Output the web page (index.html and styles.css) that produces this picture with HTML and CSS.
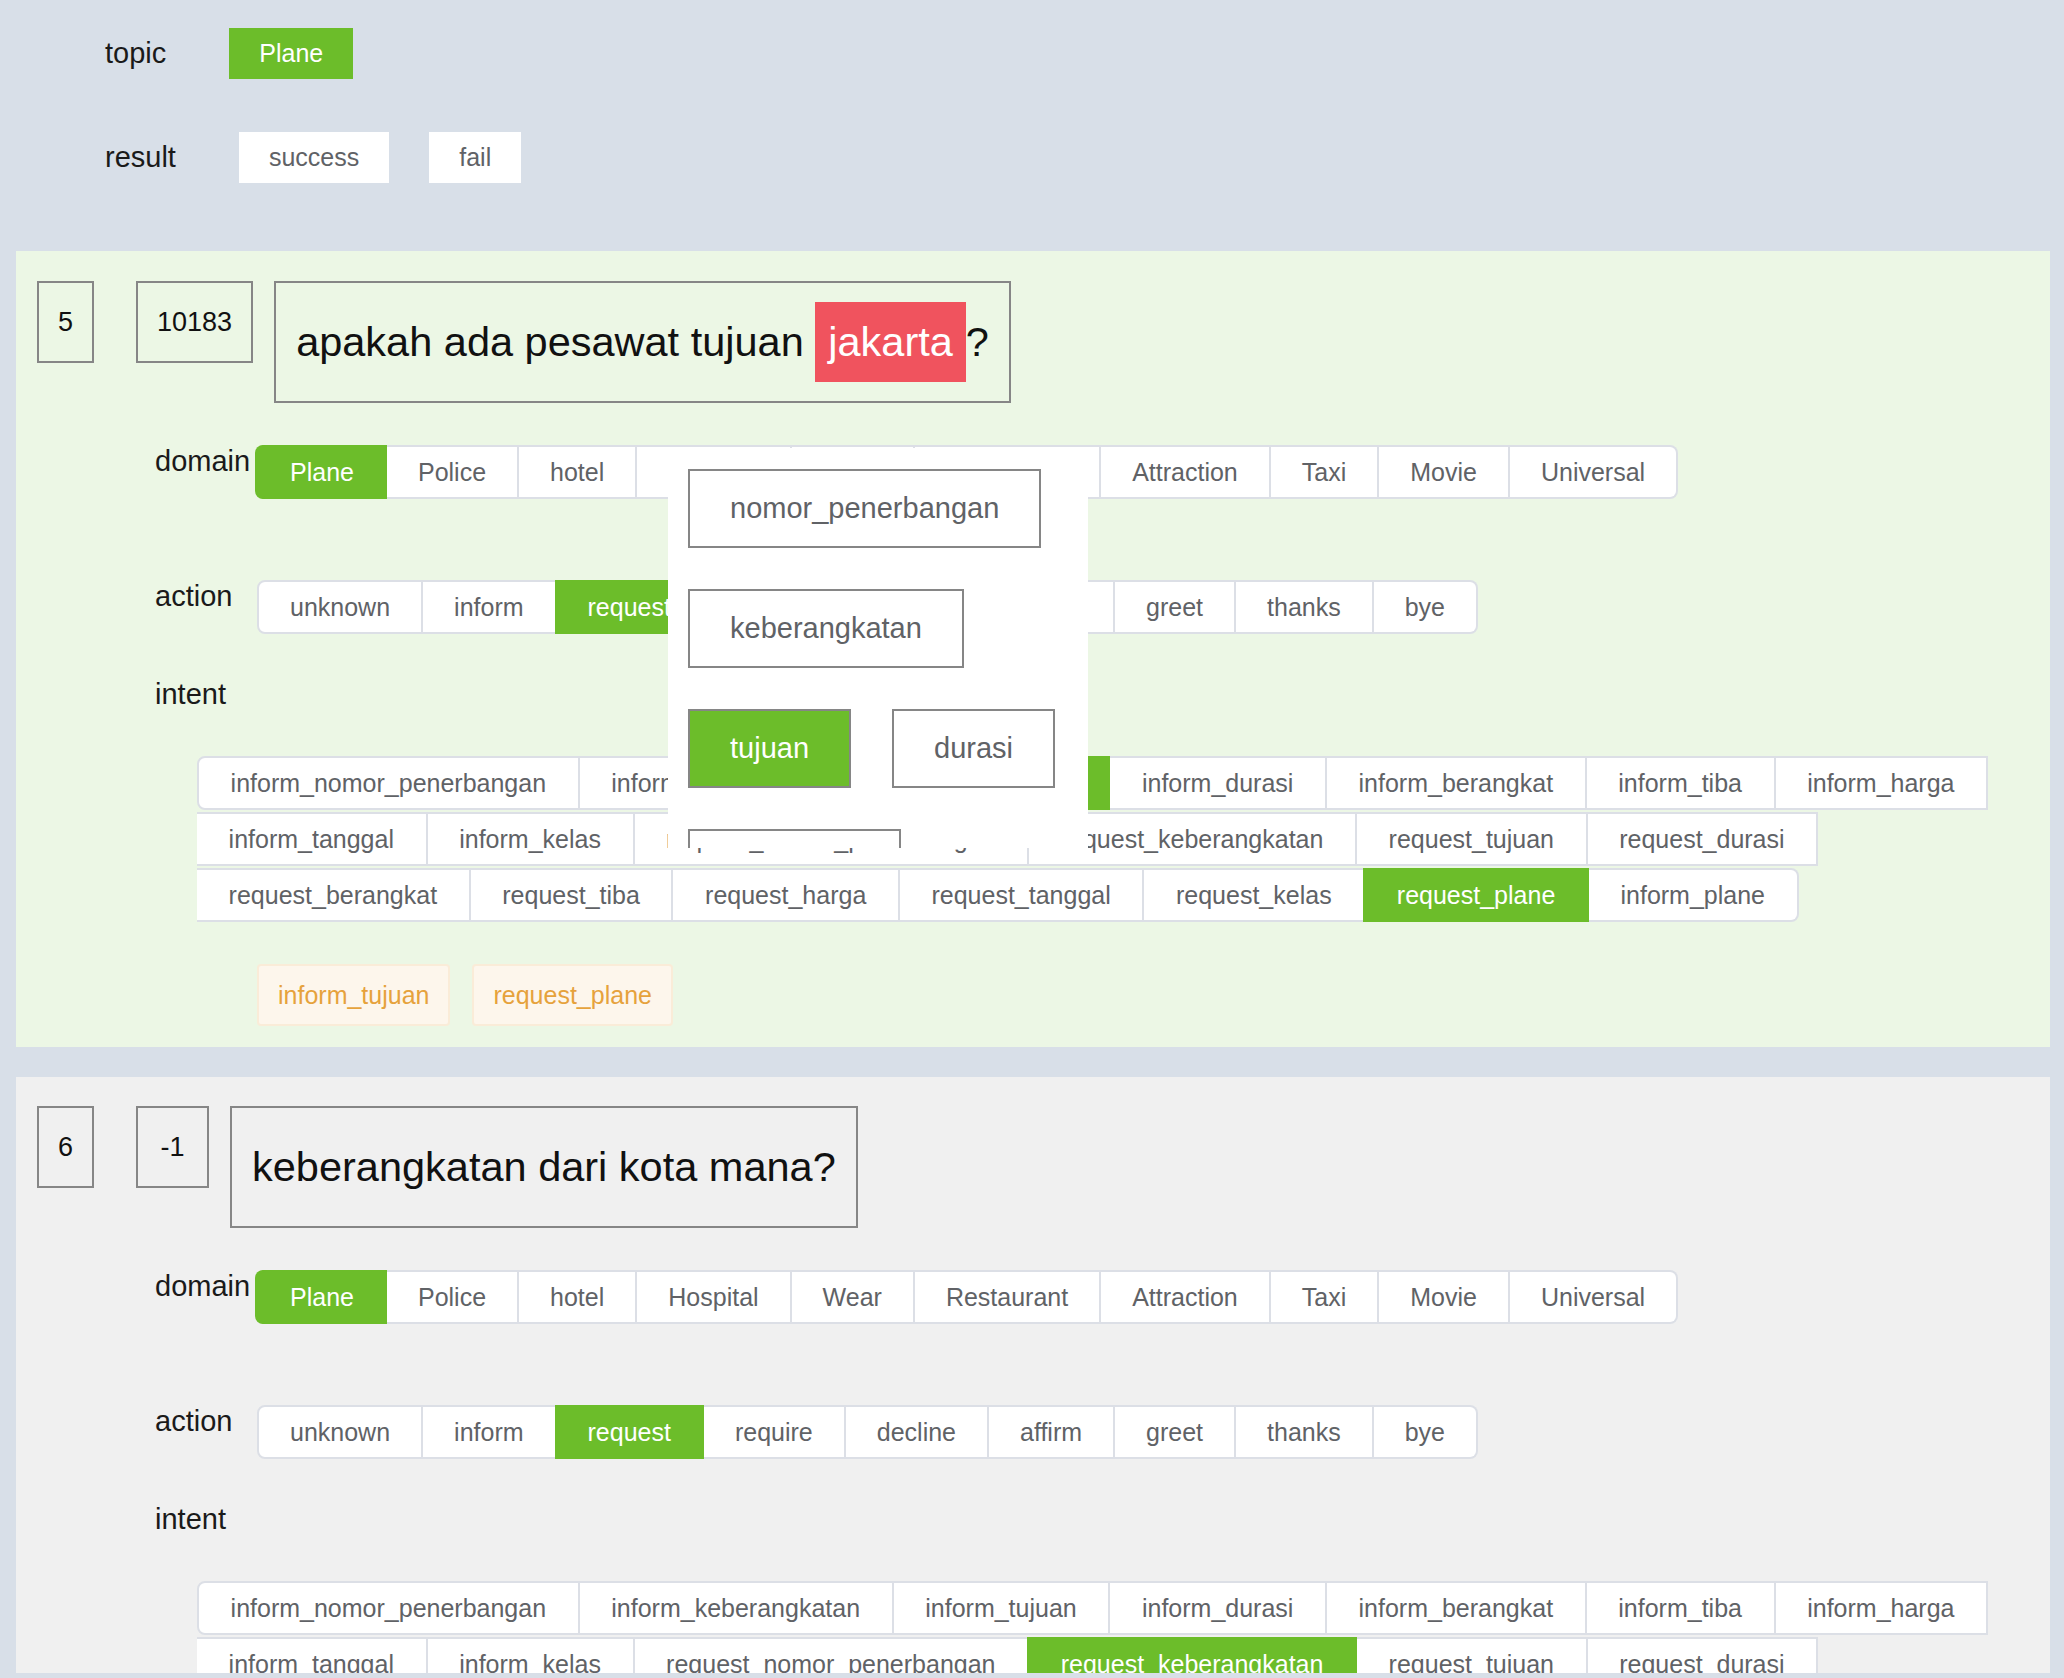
FILE: index.html
```html
<!DOCTYPE html>
<html>
<head>
<meta charset="utf-8">
<title>Dialog annotation</title>
<link rel="stylesheet" href="styles.css">
</head>
<body>
<div class="page">
  <div class="filters">
    <div class="filter-row">
      <span class="filter-label">topic</span>
      <span class="chip on">Plane</span>
    </div>
    <div class="filter-row last">
      <span class="filter-label">result</span>
      <span class="chip">success</span>
      <span class="chip">fail</span>
    </div>
  </div>

  <div class="turn turn-user">
    <div class="turn-head">
      <div class="num-box">5</div>
      <div class="num-box id">10183</div>
      <div class="utter">apakah ada pesawat tujuan <span class="ent">jakarta</span>?</div>
    </div>
    <div class="field domain-row">
      <span class="field-label">domain</span>
      <div class="rgroup">
        <span class="rb on">Plane</span><span class="rb">Police</span><span class="rb">hotel</span><span class="rb">Hospital</span><span class="rb">Wear</span><span class="rb">Restaurant</span><span class="rb">Attraction</span><span class="rb">Taxi</span><span class="rb">Movie</span><span class="rb">Universal</span>
      </div>
    </div>
    <div class="field action-row">
      <span class="field-label">action</span>
      <div class="rgroup">
        <span class="rb">unknown</span><span class="rb">inform</span><span class="rb on">request</span><span class="rb">require</span><span class="rb">decline</span><span class="rb">affirm</span><span class="rb">greet</span><span class="rb">thanks</span><span class="rb">bye</span>
      </div>
    </div>
    <div class="intent-label">intent</div>
    <div class="rgroup intents">
      <span class="rb">inform_nomor_penerbangan</span><span class="rb">inform_keberangkatan</span><span class="rb on">inform_tujuan</span><span class="rb">inform_durasi</span><span class="rb">inform_berangkat</span><span class="rb">inform_tiba</span><span class="rb">inform_harga</span><span class="rb">inform_tanggal</span><span class="rb">inform_kelas</span><span class="rb">request_nomor_penerbangan</span><span class="rb">request_keberangkatan</span><span class="rb">request_tujuan</span><span class="rb">request_durasi</span><span class="rb">request_berangkat</span><span class="rb">request_tiba</span><span class="rb">request_harga</span><span class="rb">request_tanggal</span><span class="rb">request_kelas</span><span class="rb on">request_plane</span><span class="rb">inform_plane</span>
    </div>
    <div class="tags">
      <span class="tag">inform_tujuan</span>
      <span class="tag">request_plane</span>
    </div>

    <div class="slot-pop">
      <span class="slot">nomor_penerbangan</span>
      <span class="slot">keberangkatan</span>
      <span class="slot on">tujuan</span>
      <span class="slot">durasi</span>
      <span class="slot">berangkat</span>
      <span class="slot">tiba</span>
      <span class="slot">harga</span>
    </div>
  </div>

  <div class="turn turn-sys">
    <div class="turn-head">
      <div class="num-box">6</div>
      <div class="num-box id">-1</div>
      <div class="utter">keberangkatan dari kota mana?</div>
    </div>
    <div class="field domain-row">
      <span class="field-label">domain</span>
      <div class="rgroup">
        <span class="rb on">Plane</span><span class="rb">Police</span><span class="rb">hotel</span><span class="rb">Hospital</span><span class="rb">Wear</span><span class="rb">Restaurant</span><span class="rb">Attraction</span><span class="rb">Taxi</span><span class="rb">Movie</span><span class="rb">Universal</span>
      </div>
    </div>
    <div class="field action-row">
      <span class="field-label">action</span>
      <div class="rgroup">
        <span class="rb">unknown</span><span class="rb">inform</span><span class="rb on">request</span><span class="rb">require</span><span class="rb">decline</span><span class="rb">affirm</span><span class="rb">greet</span><span class="rb">thanks</span><span class="rb">bye</span>
      </div>
    </div>
    <div class="intent-label">intent</div>
    <div class="rgroup intents">
      <span class="rb">inform_nomor_penerbangan</span><span class="rb">inform_keberangkatan</span><span class="rb">inform_tujuan</span><span class="rb">inform_durasi</span><span class="rb">inform_berangkat</span><span class="rb">inform_tiba</span><span class="rb">inform_harga</span><span class="rb">inform_tanggal</span><span class="rb">inform_kelas</span><span class="rb">request_nomor_penerbangan</span><span class="rb on">request_keberangkatan</span><span class="rb">request_tujuan</span><span class="rb">request_durasi</span><span class="rb">request_berangkat</span><span class="rb">request_tiba</span><span class="rb">request_harga</span><span class="rb">request_tanggal</span><span class="rb">request_kelas</span><span class="rb">request_plane</span><span class="rb">inform_plane</span>
    </div>
    <div class="tags">
      <span class="tag">request_keberangkatan</span>
    </div>
  </div>
</div>
</body>
</html>
```
FILE: styles.css
```css
html, body {
  margin: 0;
  padding: 0;
  background: #d8dfe8;
}
body {
  font-family: "Liberation Sans", Arial, Helvetica, sans-serif;
  color: #1a1a1a;
}
.page {
  height: 1673px;
  overflow: hidden;
}

/* top filters */
.filters {
  padding: 28px 0 0 105px;
}
.filter-row {
  display: flex;
  align-items: center;
  height: 51px;
  margin-bottom: 53px;
}
.filter-row.last {
  margin-bottom: 68px;
}
.filter-label {
  font-size: 29px;
  margin-right: 63px;
}
.chip {
  display: inline-block;
  height: 51px;
  line-height: 51px;
  padding: 0 30px;
  font-size: 25px;
  color: #606266;
  background: #fff;
  margin-right: 40px;
}
.chip.on {
  background: #6cbd2a;
  color: #fff;
}

/* turn panels */
.turn {
  position: relative;
  margin: 0 14px 30px 16px;
  padding: 30px 14px 21px 21px;
}
.turn-user {
  background: #ecf7e5;
}
.turn-sys {
  background: #f0f0f0;
  padding-top: 29px;
}
.turn-head {
  display: flex;
  align-items: flex-start;
}
.num-box {
  box-sizing: border-box;
  height: 82px;
  line-height: 78px;
  padding: 0 19px;
  border: 2px solid #868686;
  font-size: 27px;
  color: #111;
  text-align: center;
  margin-right: 42px;
}
.num-box.id {
  min-width: 73px;
  margin-right: 21px;
}
.utter {
  box-sizing: border-box;
  height: 122px;
  border: 2px solid #868686;
  padding: 19px 20px 19px 20px;
  font-size: 41.5px;
  line-height: 80px;
  color: #111;
  white-space: nowrap;
}
.ent {
  display: inline-block;
  background: #f0535e;
  color: #fff;
  padding: 0 13px;
  line-height: 80px;
}

.field {
  display: flex;
  align-items: flex-start;
  margin-left: 118px;
}
.domain-row {
  margin-top: 42px;
}
.action-row {
  margin-top: 81px;
}
.field-label {
  width: 102px;
  flex: none;
  font-size: 29px;
}
.intent-label {
  margin: 44px 0 0 118px;
  font-size: 29px;
}

/* radio button groups */
.rgroup {
  display: flex;
  flex-wrap: wrap;
  row-gap: 2px;
}
.rb {
  box-sizing: border-box;
  height: 54px;
  line-height: 50px;
  padding: 0 31px;
  font-size: 25px;
  color: #606266;
  background: #fff;
  border: 2px solid #dcdfe6;
  border-left: 0;
  white-space: nowrap;
}
.rb:first-child {
  border-left: 2px solid #dcdfe6;
  border-radius: 8px 0 0 8px;
}
.rb:last-child {
  border-radius: 0 8px 8px 0;
}
.rb.on {
  background: #6cbd2a;
  border-color: #6cbd2a;
  color: #fff;
  box-shadow: -2px 0 0 0 #6cbd2a;
}
.intents {
  margin: 45px 0 0 160px;
}
.intents .rb {
  padding: 0 31.6px;
}

/* tags */
.tags {
  display: flex;
  gap: 22px;
  margin: 42px 0 0 220px;
}
.tag {
  box-sizing: border-box;
  height: 62px;
  line-height: 58px;
  padding: 0 19px;
  font-size: 25px;
  color: #e6a23c;
  background: #fdf6ec;
  border: 2px solid #faecd8;
  border-radius: 4px;
}

/* slot picker popover */
.slot-pop {
  position: absolute;
  left: 652px;
  top: 197px;
  width: 420px;
  height: 400px;
  box-sizing: border-box;
  padding: 21px 20px 0 20px;
  background: #fff;
  overflow: hidden;
  display: flex;
  flex-wrap: wrap;
  align-content: flex-start;
  gap: 41px;
}
.slot {
  box-sizing: border-box;
  height: 79px;
  line-height: 75px;
  padding: 0 40px;
  border: 2px solid #868686;
  font-size: 29px;
  color: #606266;
  background: #fff;
  white-space: nowrap;
}
.slot.on {
  background: #6cbd2a;
  color: #fff;
}
```
